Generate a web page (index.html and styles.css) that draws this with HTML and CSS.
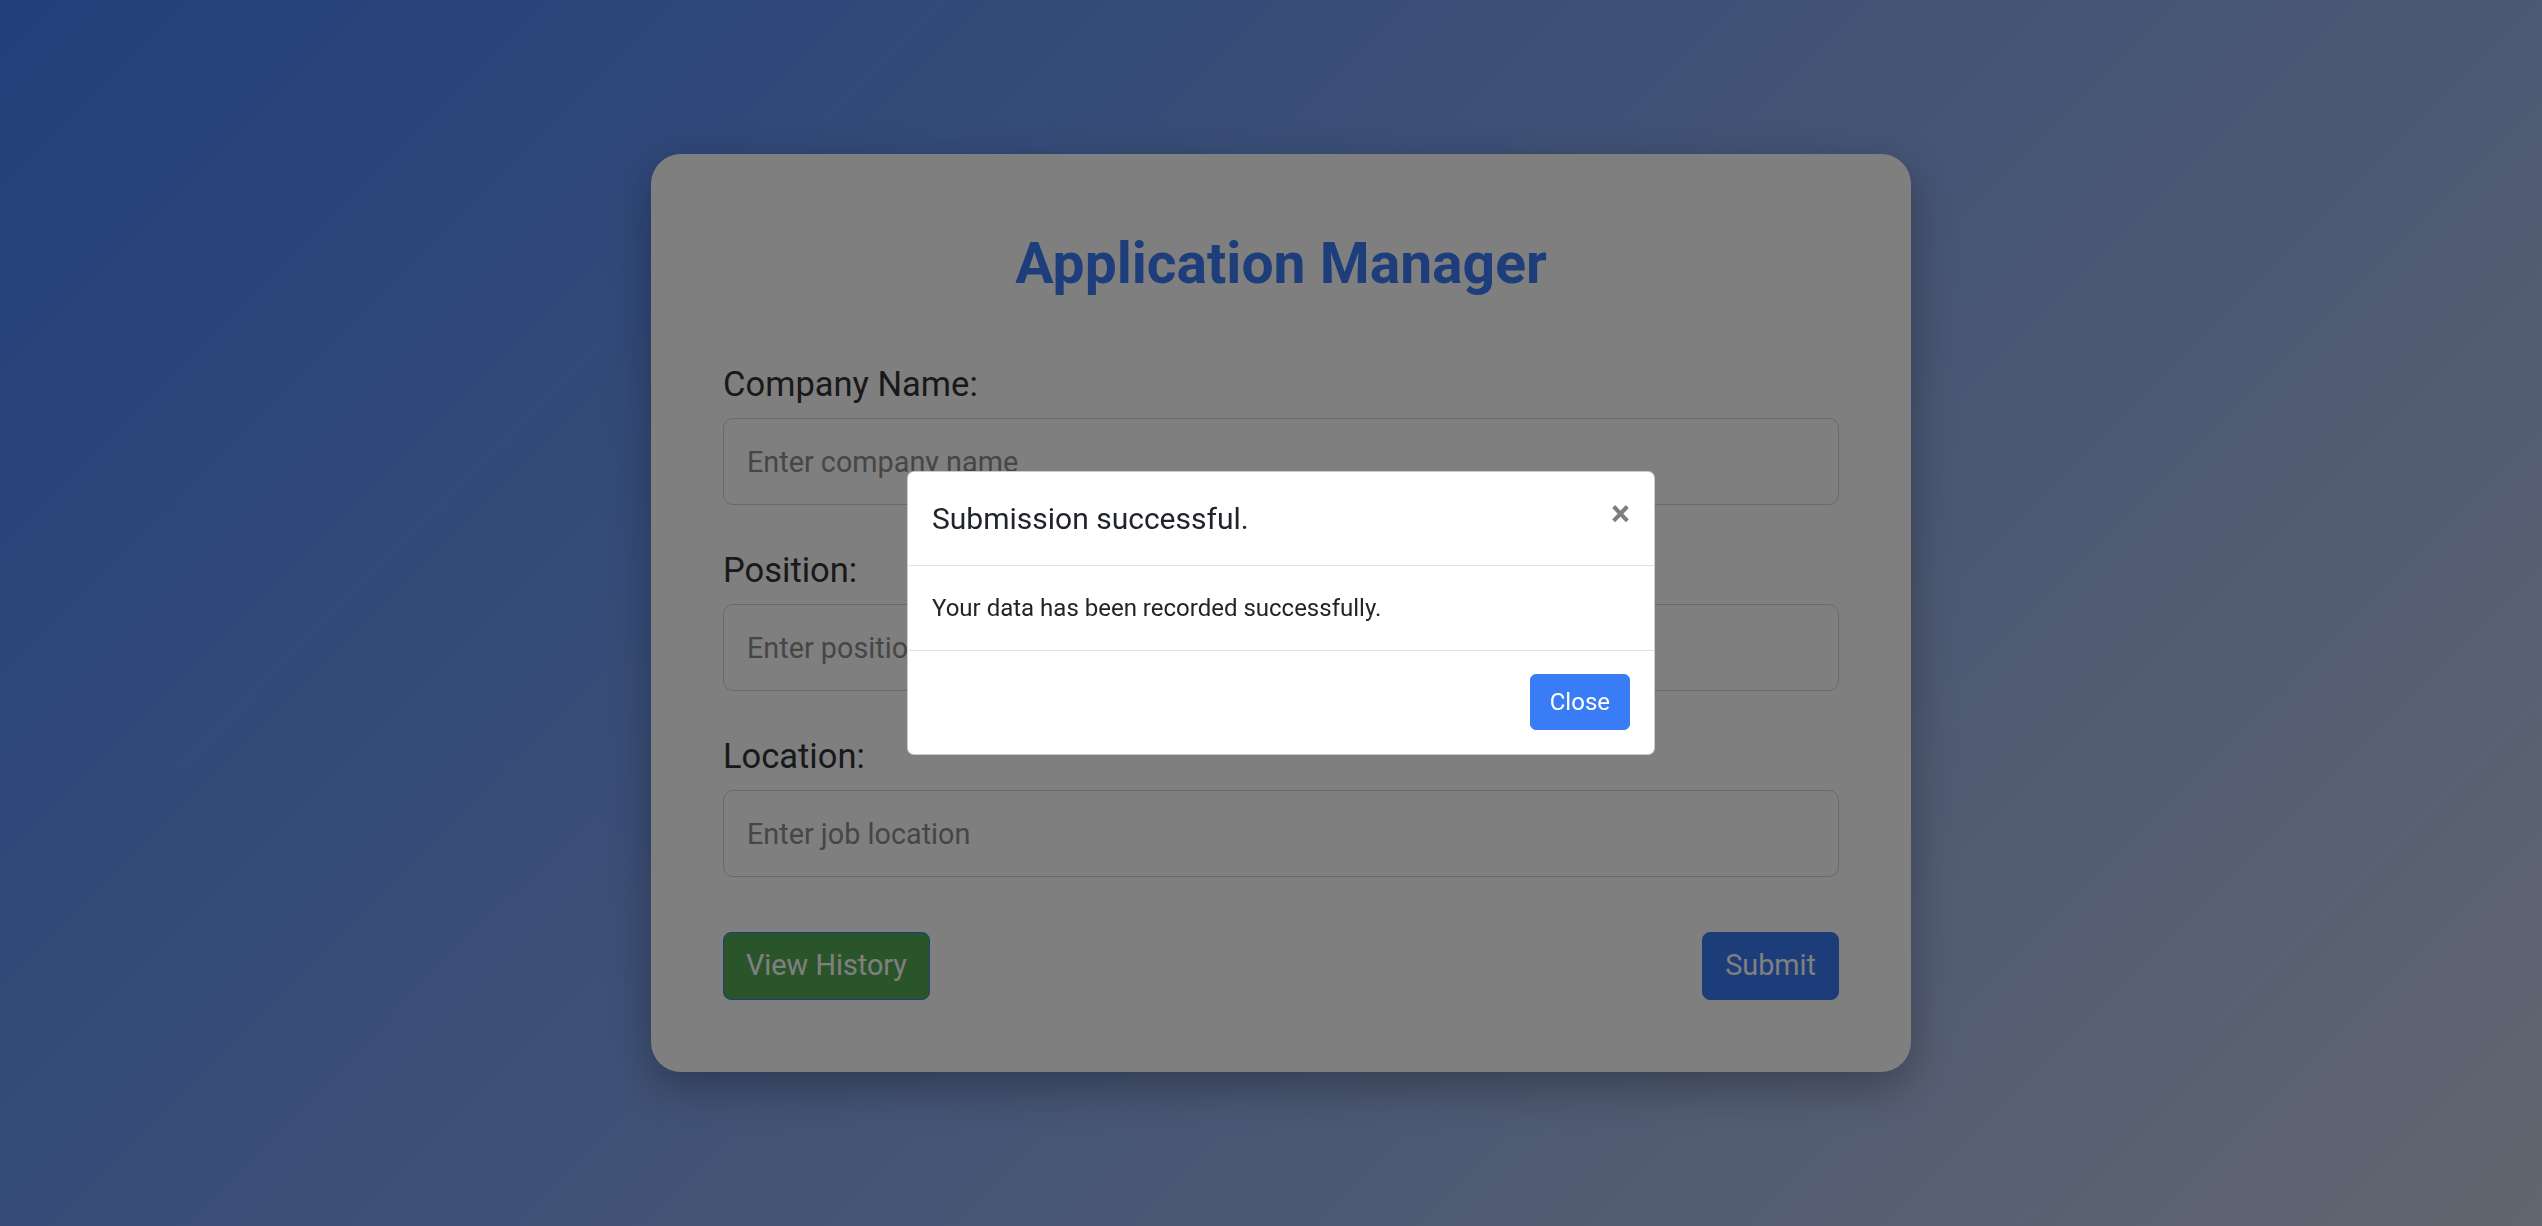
FILE: index.html
```html
<!DOCTYPE html>
<html lang="en">
<head>
<meta charset="utf-8">
<title>Application Manager</title>
<link rel="stylesheet" href="styles.css">
</head>
<body>
  <main class="card">
    <h1 class="card-title">Application Manager</h1>
    <form class="form">
      <div class="form-group">
        <label class="form-label" for="company">Company Name:</label>
        <input class="form-input" id="company" type="text" placeholder="Enter company name">
      </div>
      <div class="form-group">
        <label class="form-label" for="position">Position:</label>
        <input class="form-input" id="position" type="text" placeholder="Enter position">
      </div>
      <div class="form-group">
        <label class="form-label" for="location">Location:</label>
        <input class="form-input" id="location" type="text" placeholder="Enter job location">
      </div>
      <div class="form-actions">
        <button type="button" class="btn btn-green">View History</button>
        <button type="button" class="btn btn-blue">Submit</button>
      </div>
    </form>
  </main>

  <div class="modal-layer">
    <div class="modal">
      <div class="modal-header">
        <h5 class="modal-title">Submission successful.</h5>
        <button type="button" class="modal-x" aria-label="Close">&times;</button>
      </div>
      <div class="modal-body">Your data has been recorded successfully.</div>
      <div class="modal-footer">
        <button type="button" class="modal-btn">Close</button>
      </div>
    </div>
  </div>
</body>
</html>
```

FILE: styles.css
```css
* {
  box-sizing: border-box;
}

html, body {
  margin: 0;
  height: 100%;
}

body {
  font-family: "Roboto", "Liberation Sans", sans-serif;
  background: linear-gradient(135deg, #4480f8 0%, #c4cce0 100%);
  display: flex;
  align-items: center;
  justify-content: center;
  padding-left: 20px;
  overflow: hidden;
}

.card {
  width: 1260px;
  background: #ffffff;
  border-radius: 30px;
  padding: 76px 72px 72px;
  box-shadow: 0 15px 45px rgba(0, 0, 0, 0.3);
}

.card-title {
  margin: 0 0 62px;
  text-align: center;
  font-size: 57px;
  line-height: 68px;
  font-weight: 700;
  color: #3a7cf6;
}

.form {
  margin: 0;
}

.form-group {
  margin-bottom: 41px;
}

.form-label {
  display: block;
  font-size: 34.5px;
  line-height: 48px;
  color: #333333;
  margin-bottom: 10px;
}

.form-input {
  display: block;
  width: 100%;
  height: 87px;
  padding: 0 23px;
  font-family: inherit;
  font-size: 28.8px;
  line-height: 43.2px;
  color: #333;
  background: #ffffff;
  border: 1px solid #d2d2d2;
  border-radius: 10px;
  outline: none;
}

.form-input::placeholder {
  color: #8c8c8c;
}

.form-actions {
  display: flex;
  justify-content: space-between;
  margin-top: 55px;
}

.btn {
  font-family: inherit;
  font-size: 28.8px;
  line-height: 43.2px;
  padding: 11px 22px;
  color: #ffffff;
  border-radius: 8px;
  cursor: pointer;
}

.btn-green {
  background: #54aa56;
  border: 1px solid #3f7fe8;
}

.btn-blue {
  background: #3878f4;
  border: 1px solid #3878f4;
}

/* Modal */
.modal-layer {
  position: fixed;
  inset: 0;
  background: rgba(0, 0, 0, 0.5);
  display: flex;
  align-items: center;
  justify-content: center;
  padding-left: 20px;
}

.modal {
  width: 748px;
  background: #ffffff;
  border: 1px solid rgba(0, 0, 0, 0.2);
  border-radius: 7px;
  color: #212529;
}

.modal-header {
  display: flex;
  align-items: flex-start;
  padding: 24px;
  border-bottom: 1px solid #dee2e6;
}

.modal-title {
  margin: 0;
  font-size: 30px;
  line-height: 45px;
  font-weight: 400;
}

.modal-x {
  margin: -24px -24px -24px auto;
  padding: 24px;
  background: transparent;
  border: 0;
  font-family: inherit;
  font-size: 36px;
  line-height: 1;
  font-weight: 700;
  color: #000;
  opacity: 0.5;
  text-shadow: 0 1px 0 #fff;
  cursor: pointer;
}

.modal-body {
  padding: 24px;
  font-size: 24px;
  line-height: 36px;
}

.modal-footer {
  display: flex;
  justify-content: flex-end;
  padding: 23px 24px 24px;
  border-top: 1px solid #dee2e6;
}

.modal-btn {
  font-family: inherit;
  font-size: 24px;
  line-height: 36px;
  padding: 9px 19px;
  color: #ffffff;
  background: #3a7cf6;
  border: 1px solid #3a7cf6;
  border-radius: 6px;
  cursor: pointer;
}
```
